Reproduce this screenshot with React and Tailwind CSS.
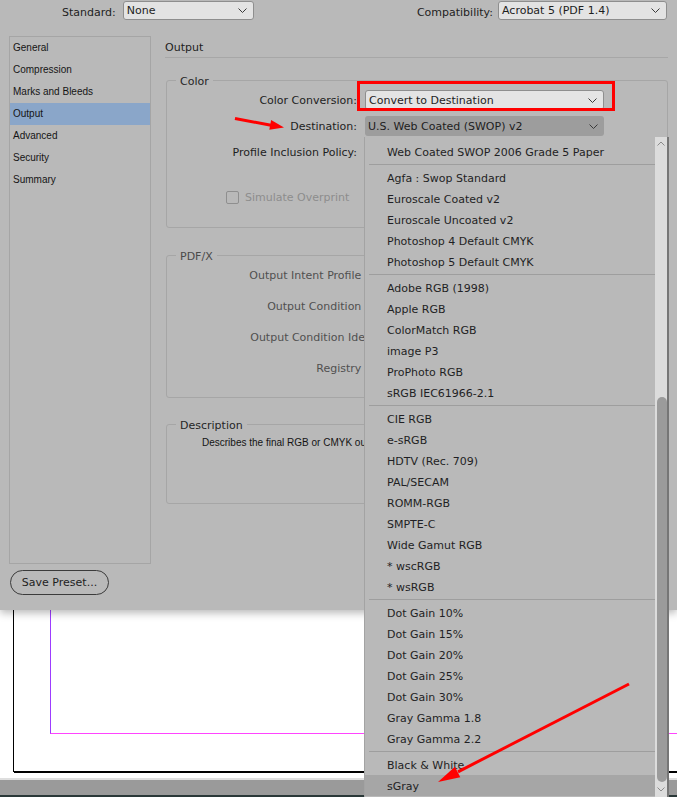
import React from 'react';

const NAV = ['General', 'Compression', 'Marks and Bleeds', 'Output', 'Advanced', 'Security', 'Summary'];

const PROFILES = [
  ['Web Coated SWOP 2006 Grade 5 Paper'],
  ['Agfa : Swop Standard', 'Euroscale Coated v2', 'Euroscale Uncoated v2', 'Photoshop 4 Default CMYK', 'Photoshop 5 Default CMYK'],
  ['Adobe RGB (1998)', 'Apple RGB', 'ColorMatch RGB', 'image P3', 'ProPhoto RGB', 'sRGB IEC61966-2.1'],
  ['CIE RGB', 'e-sRGB', 'HDTV (Rec. 709)', 'PAL/SECAM', 'ROMM-RGB', 'SMPTE-C', 'Wide Gamut RGB', '* wscRGB', '* wsRGB'],
  ['Dot Gain 10%', 'Dot Gain 15%', 'Dot Gain 20%', 'Dot Gain 25%', 'Dot Gain 30%', 'Gray Gamma 1.8', 'Gray Gamma 2.2'],
  ['Black & White', 'sGray'],
];

const PDFX_LABELS = ['Output Intent Profile Name:', 'Output Condition Name:', 'Output Condition Identifier:', 'Registry Name:'];

const Chevron = ({ color = '#3a3a3a' }) => (
  <svg width="9" height="5" viewBox="0 0 9 5">
    <path d="M0.5 0.5 L4.5 4.5 L8.5 0.5" fill="none" stroke={color} strokeWidth="1" />
  </svg>
);

const Select = ({ value, className }) => (
  <div className={`flex items-center justify-between rounded-[3px] pl-[3px] pr-[6px] ${className}`}>
    <span className="whitespace-nowrap pt-[2px]">{value}</span>
    <Chevron />
  </div>
);

const Group = ({ legend, legendClass = '', className = '', children }) => (
  <div className={`relative ml-px rounded-[3px] border border-[#a6a6a6] ${className}`}>
    <span className={`absolute -top-[8px] left-[9px] bg-[#b9b9b9] px-[4px] pt-px leading-[15px] ${legendClass}`}>{legend}</span>
    {children}
  </div>
);

const Row = ({ label, children }) => (
  <div className="flex h-[20px] items-center">
    <div className="w-[190px] whitespace-nowrap pt-[2px] text-right">{label}</div>
    {children}
  </div>
);

const ProfileList = () => (
  <div className="w-[290px] pt-[4px]">
    {PROFILES.map((group, gi) => (
      <div key={gi}>
        {gi > 0 && (
          <div className="ml-[4px] flex h-[5px] items-center">
            <div className="h-px w-full bg-[#9e9e9e]" />
          </div>
        )}
        {group.map((name) => (
          <div
            key={name}
            className={`h-[21px] overflow-hidden whitespace-nowrap pl-[22px] pt-px leading-[21px] text-[#1f1f24] ${name === 'sGray' ? 'bg-[#a6a6a6]' : ''}`}
          >
            {name}
          </div>
        ))}
      </div>
    ))}
  </div>
);

export default function App() {
  return (
    <div className="relative h-[797px] w-[677px] overflow-hidden bg-white font-['DejaVu_Sans',sans-serif] text-[11px] text-[#1e1e1e]">
      {/* export dialog */}
      <div className="relative z-10 h-[610px] bg-[#b9b9b9] shadow-[0_3px_8px_rgba(0,0,0,0.28)]">
        <div className="flex h-[21px] items-start pt-px">
          <div className="ml-[62px] h-[19px] pt-[2px] leading-[19px]">Standard:</div>
          <Select value="None" className="ml-[7px] h-[19px] w-[131px] border border-[#8e8e8e] bg-[#e3e3e3]" />
          <div className="ml-auto h-[19px] pt-[2px] leading-[19px]">Compatibility:</div>
          <Select value="Acrobat 5 (PDF 1.4)" className="ml-[5px] mr-[10px] h-[19px] w-[169px] border border-[#8e8e8e] bg-[#e3e3e3]" />
        </div>

        <div className="mt-[15px] flex">
          <div className="ml-[9px] flex flex-col">
            <div className="h-[528px] w-[142px] border border-[#a5a5a5] font-['Liberation_Sans',Arial,sans-serif] text-[10px] text-[#151515]">
              {NAV.map((n) => (
                <div key={n} className={`h-[22px] pl-[3px] leading-[21px] ${n === 'Output' ? 'bg-[#8aa6c9]' : ''}`}>
                  {n}
                </div>
              ))}
            </div>
            <button className="ml-px mt-[6px] h-[25px] w-[99px] rounded-full border border-[#3b3b3b] pt-px text-[11px] text-[#1e1e1e]">
              Save Preset...
            </button>
          </div>

          <div className="ml-[14px] w-[503px]">
            <div className="h-[22px] border-b border-[#a7a7a7] pt-px leading-[21px]">Output</div>

            <Group legend="Color" legendClass="text-[#262626]" className="mt-[22px] h-[148px] pt-[9px]">
              <div className="flex flex-col gap-[6px]">
                <Row label="Color Conversion:">
                  <Select value="Convert to Destination" className="ml-[8px] h-[20px] w-[239px] border border-[#8e8e8e] bg-[#e4e4e4]" />
                </Row>
                <Row label="Destination:">
                  <Select value="U.S. Web Coated (SWOP) v2" className="ml-[8px] h-[20px] w-[239px] bg-[#9d9d9d]" />
                </Row>
                <Row label="Profile Inclusion Policy:" />
              </div>
              <div className="mt-[25px] flex h-[20px] items-center pl-[59px] text-[#8d8d8d]">
                <span className="h-[13px] w-[13px] rounded-[2px] border border-[#8f8f8f]" />
                <span className="ml-[6px] pt-[2px]">Simulate Overprint</span>
              </div>
            </Group>

            <Group legend="PDF/X" legendClass="text-[#4a4a4a]" className="mt-[27px] h-[143px] pt-[9px] text-[#505050]">
              <div className="flex w-[197px] flex-col gap-[11px] overflow-hidden">
                {PDFX_LABELS.map((l) => (
                  <div key={l} className="flex h-[20px] w-[234px] shrink-0 items-center justify-end whitespace-nowrap pt-[2px]">
                    {l}
                  </div>
                ))}
              </div>
            </Group>

            <Group legend="Description" legendClass="text-[#262626]" className="mt-[26px] h-[80px] pl-[35px] pt-[10px]">
              <div className="w-[162px] overflow-hidden">
                <p className="whitespace-nowrap pt-px font-['Liberation_Sans',Arial,sans-serif] text-[10px] leading-[14px] text-[#141414]">
                  Describes the final RGB or CMYK output device, such as your monitor or a SWOP standard.
                </p>
              </div>
            </Group>
          </div>
        </div>
      </div>

      {/* document behind the dialog */}
      <div className="flex h-[187px] flex-col">
        <div className="h-[168px] bg-white pl-[13px]">
          <div className="h-[162px] border-b border-l border-black shadow-[1px_1px_0_#000]">
            <div className="ml-[36px] h-[124px] border-b border-l border-b-[#ff44ff] border-l-[#9d3cff]" />
          </div>
        </div>
        <div className="h-[2px] bg-[#dedede]" />
        <div className="h-[15px] bg-[#9a9a9a]" />
        <div className="h-[2px] bg-[#2a3838]" />
      </div>

      {/* open destination list */}
      <div className="absolute left-[364px] top-[137px] z-20 flex h-[660px] w-[305px] border-l border-r-2 border-l-[#a3a3a3] border-r-[#767676] bg-[#b9b9b9]">
        <ProfileList />
        <div className="relative w-[12px] bg-[#dcdcdc]">
          <div className="absolute left-[2px] top-[4px]">
            <svg width="8" height="5" viewBox="0 0 8 5">
              <path d="M0.5 4.5 L4 1 L7.5 4.5" fill="none" stroke="#8a8a8a" strokeWidth="1" />
            </svg>
          </div>
          <div className="absolute left-[2px] top-[260px] h-[385px] w-[10px] rounded-[5px] bg-[#9b9b9b]" />
          <div className="absolute left-[2px] top-[650px]">
            <svg width="8" height="5" viewBox="0 0 8 5">
              <path d="M0.5 0.5 L4 4 L7.5 0.5" fill="none" stroke="#8a8a8a" strokeWidth="1" />
            </svg>
          </div>
        </div>
      </div>

      {/* annotations */}
      <div className="absolute left-[357px] top-[81px] z-30 h-[30px] w-[258px] border-[3px] border-[#ff0000]" />
      <svg className="pointer-events-none absolute inset-0 z-30" width="677" height="797" viewBox="0 0 677 797">
        <line x1="235" y1="118.5" x2="271" y2="125.2" stroke="#ff0000" strokeWidth="3" />
        <polygon points="284,127.5 271.1,120 269.3,129.8" fill="#ff0000" />
        <line x1="629" y1="684" x2="458" y2="771.8" stroke="#ff0000" strokeWidth="3" />
        <polygon points="438,782 460.3,777.3 454.9,766.7" fill="#ff0000" />
      </svg>
    </div>
  );
}
